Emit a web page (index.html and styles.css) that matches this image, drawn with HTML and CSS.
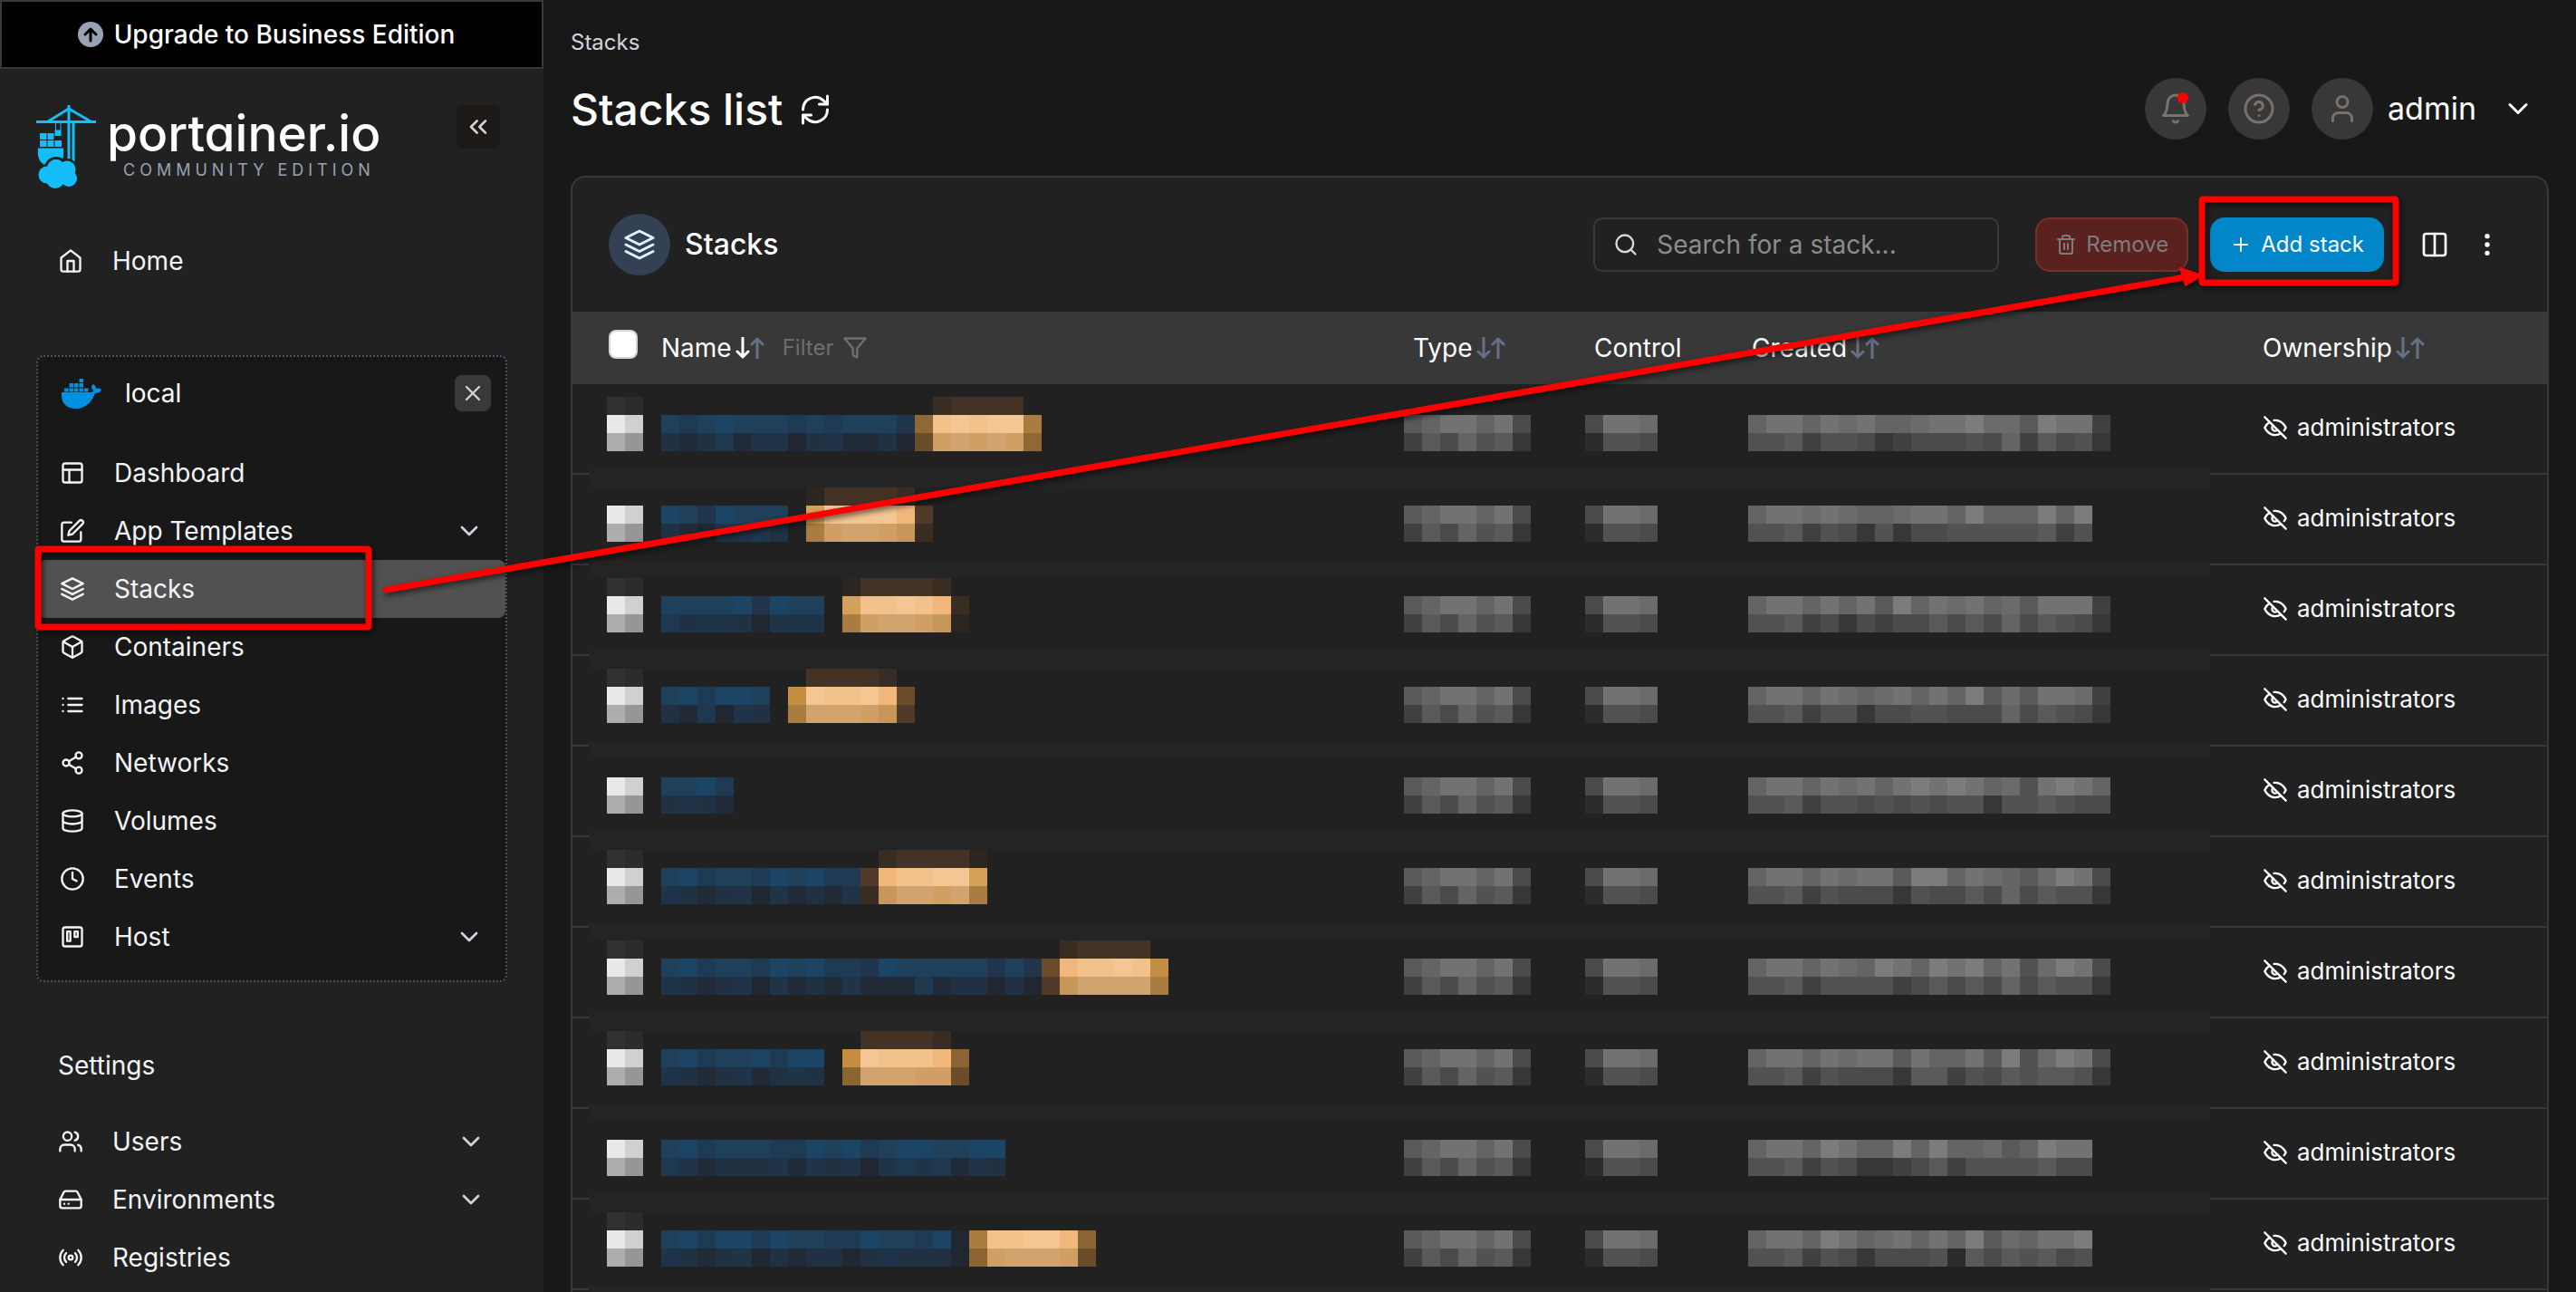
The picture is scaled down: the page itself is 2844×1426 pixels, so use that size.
FILE: index.html
```html
<!DOCTYPE html>
<html lang="en">
<head>
    <meta charset="UTF-8">
    <meta name="viewport" content="width=device-width, initial-scale=1.0">
    <title>Stacks list</title>
    <link rel="stylesheet" href="styles.css">
</head>
<body>
    <!-- icon sprite -->
    <svg class="sprite" aria-hidden="true">
        <symbol id="i-home" viewBox="0 0 24 24"><path d="M3 9l9-7 9 7v11a2 2 0 0 1-2 2H5a2 2 0 0 1-2-2z"/><path d="M9 22V12h6v10"/></symbol>
        <symbol id="i-layout" viewBox="0 0 24 24"><rect x="3" y="3" width="18" height="18" rx="2"/><path d="M3 9h18M9 21V9"/></symbol>
        <symbol id="i-edit" viewBox="0 0 24 24"><path d="M11 4H4a2 2 0 0 0-2 2v14a2 2 0 0 0 2 2h14a2 2 0 0 0 2-2v-7"/><path d="M18.5 2.5a2.12 2.12 0 0 1 3 3L12 15l-4 1 1-4z"/></symbol>
        <symbol id="i-layers" viewBox="0 0 24 24"><path d="M12 2L2 7l10 5 10-5z"/><path d="M2 17l10 5 10-5"/><path d="M2 12l10 5 10-5"/></symbol>
        <symbol id="i-box" viewBox="0 0 24 24"><path d="M21 16V8a2 2 0 0 0-1-1.73l-7-4a2 2 0 0 0-2 0l-7 4A2 2 0 0 0 3 8v8a2 2 0 0 0 1 1.73l7 4a2 2 0 0 0 2 0l7-4A2 2 0 0 0 21 16z"/><path d="M3.3 7L12 12l8.7-5M12 22V12"/></symbol>
        <symbol id="i-list" viewBox="0 0 24 24"><path d="M8 6h13M8 12h13M8 18h13M3 6h.01M3 12h.01M3 18h.01"/></symbol>
        <symbol id="i-share" viewBox="0 0 24 24"><circle cx="18" cy="5" r="3"/><circle cx="6" cy="12" r="3"/><circle cx="18" cy="19" r="3"/><path d="M8.59 13.51l6.83 3.98M15.41 6.51l-6.82 3.98"/></symbol>
        <symbol id="i-database" viewBox="0 0 24 24"><ellipse cx="12" cy="5" rx="9" ry="3"/><path d="M21 12c0 1.66-4 3-9 3s-9-1.34-9-3"/><path d="M3 5v14c0 1.66 4 3 9 3s9-1.34 9-3V5"/></symbol>
        <symbol id="i-clock" viewBox="0 0 24 24"><circle cx="12" cy="12" r="10"/><path d="M12 6v6l4 2"/></symbol>
        <symbol id="i-trello" viewBox="0 0 24 24"><rect x="3" y="3" width="18" height="18" rx="2"/><path d="M7 7h3v9H7zM14 7h3v5h-3z"/></symbol>
        <symbol id="i-users" viewBox="0 0 24 24"><path d="M16 21v-2a4 4 0 0 0-4-4H6a4 4 0 0 0-4 4v2"/><circle cx="9" cy="7" r="4"/><path d="M22 21v-2a4 4 0 0 0-3-3.87M16 3.13a4 4 0 0 1 0 7.75"/></symbol>
        <symbol id="i-drive" viewBox="0 0 24 24"><path d="M22 12H2"/><path d="M5.45 5.11L2 12v6a2 2 0 0 0 2 2h16a2 2 0 0 0 2-2v-6l-3.45-6.89A2 2 0 0 0 16.76 4H7.24a2 2 0 0 0-1.79 1.11z"/><path d="M6 16h.01M10 16h.01"/></symbol>
        <symbol id="i-radio" viewBox="0 0 24 24"><circle cx="12" cy="12" r="2"/><path d="M4.93 19.07a10 10 0 0 1 0-14.14M7.76 16.24a6 6 0 0 1 0-8.49M16.24 7.76a6 6 0 0 1 0 8.49M19.07 4.93a10 10 0 0 1 0 14.14"/></symbol>
        <symbol id="i-chevron" viewBox="0 0 24 24"><path d="M6 9l6 6 6-6"/></symbol>
        <symbol id="i-chevrons-left" viewBox="0 0 24 24"><path d="M11 17l-5-5 5-5M18 17l-5-5 5-5"/></symbol>
        <symbol id="i-x" viewBox="0 0 24 24"><path d="M18 6L6 18M6 6l12 12"/></symbol>
        <symbol id="i-refresh" viewBox="0 0 24 24"><path d="M21 2v6h-6"/><path d="M3 12a9 9 0 0 1 15-6.7L21 8"/><path d="M3 22v-6h6"/><path d="M21 12a9 9 0 0 1-15 6.7L3 16"/></symbol>
        <symbol id="i-bell" viewBox="0 0 24 24"><path d="M6 8a6 6 0 0 1 12 0c0 7 3 9 3 9H3s3-2 3-9"/><path d="M10.3 21a1.94 1.94 0 0 0 3.4 0"/></symbol>
        <symbol id="i-help" viewBox="0 0 24 24"><circle cx="12" cy="12" r="10"/><path d="M9.09 9a3 3 0 0 1 5.83 1c0 2-3 3-3 3M12 17h.01"/></symbol>
        <symbol id="i-user" viewBox="0 0 24 24"><path d="M19 21v-2a4 4 0 0 0-4-4H9a4 4 0 0 0-4 4v2"/><circle cx="12" cy="7" r="4"/></symbol>
        <symbol id="i-search" viewBox="0 0 24 24"><circle cx="11" cy="11" r="8"/><path d="M21 21l-4.3-4.3"/></symbol>
        <symbol id="i-trash" viewBox="0 0 24 24"><path d="M3 6h18M19 6v14a2 2 0 0 1-2 2H7a2 2 0 0 1-2-2V6M8 6V4a2 2 0 0 1 2-2h4a2 2 0 0 1 2 2v2M10 11v6M14 11v6"/></symbol>
        <symbol id="i-plus" viewBox="0 0 24 24"><path d="M12 5v14M5 12h14"/></symbol>
        <symbol id="i-columns" viewBox="0 0 24 24"><rect x="3" y="3" width="18" height="18" rx="2"/><path d="M12 3v18"/></symbol>
        <symbol id="i-more" viewBox="0 0 24 24"><circle cx="12" cy="12" r="1"/><circle cx="12" cy="5" r="1"/><circle cx="12" cy="19" r="1"/></symbol>
        <symbol id="i-filter" viewBox="0 0 24 24"><path d="M22 3H2l8 9.46V19l4 2v-8.54z"/></symbol>
        <symbol id="i-eye-off" viewBox="0 0 24 24"><path d="M9.88 9.88a3 3 0 1 0 4.24 4.24"/><path d="M10.73 5.08A10.43 10.43 0 0 1 12 5c7 0 10 7 10 7a13.16 13.16 0 0 1-1.67 2.68"/><path d="M6.61 6.61A13.53 13.53 0 0 0 2 12s3 7 10 7a9.74 9.74 0 0 0 5.39-1.61"/><path d="M2 2l20 20"/></symbol>
        <symbol id="i-sort" viewBox="0 0 32 24"><path class="down" d="M8 1v21M2 16l6 6 6-6"/><path class="up" d="M24 23V2M18 8l6-6 6 6"/></symbol>
    </svg>

    <div class="layout">
        <aside class="sidebar">
            <button class="upgrade" type="button">
                <svg class="upgrade-icon" viewBox="0 0 28 28"><circle cx="14" cy="14" r="14" fill="#98a2b3"/><path d="M14 21V8M8 14l6-6 6 6" fill="none" stroke="#000" stroke-width="3" stroke-linecap="round" stroke-linejoin="round"/></svg>
                Upgrade to Business Edition
            </button>

            <div class="brand">
                <svg class="crane" viewBox="0 0 66 92" fill="#13bef9">
                    <path d="M0 17h66v3H0z"/>
                    <path d="M34.500 0h3v61h-3zM39.500 20h3v44h-3z"/>
                    <path d="M13 18L36 4l24 14" fill="none" stroke="#13bef9" stroke-width="3"/>
                    <path d="M21 20h1v8h-1zM26.500 20h1v8h-1zM20.500 27.500h7V34h-7z"/>
                    <path d="M4 31h7.500v7H4zM12.500 31h7v7h-7zM4 39h7.500v7H4zM12.500 39h7v7h-7zM20.500 39h7.500v7h-7.500z"/>
                    <path d="M2 47.500h28c1 9-1 18-8 19H10C3 63 1 57 2 47.500z"/>
                    <g stroke="#212121" stroke-width="3">
                        <circle cx="12" cy="77" r="10.500"/><circle cx="22" cy="70" r="11.500"/><circle cx="34" cy="71" r="10.500"/><circle cx="36" cy="81" r="10"/><circle cx="21" cy="82" r="11"/>
                    </g>
                    <circle cx="12" cy="77" r="9.500"/><circle cx="22" cy="70" r="10"/><circle cx="34" cy="71" r="9.500"/><circle cx="36" cy="81" r="9"/><circle cx="21" cy="82" r="10"/>
                </svg>
                <div class="brand-text">
                    <span class="brand-name">portainer.io</span>
                    <span class="brand-edition">COMMUNITY EDITION</span>
                </div>
                <button class="collapse" type="button" aria-label="Collapse"><svg class="icon"><use href="#i-chevrons-left"/></svg></button>
            </div>

            <nav>
                <ul class="menu menu-home">
                    <li><a href="#"><svg class="icon"><use href="#i-home"/></svg>Home</a></li>
                </ul>

                <div class="environment">
                    <div class="environment-head">
                        <svg class="docker" viewBox="0 0 44 33" fill="#0091e2">
                            <path d="M0 15h32c2 0 3-1 3-2-3-3-2-6 0-7 2 1 3 3 3 5 2-1 5 0 6 1-1 3-4 4-7 4-4 11-12 17-21 17C4 33-1 26 0 15z"/>
                            <path d="M3 10.500h4.500v4H3zM8.500 10.500H13v4H8.500zM14 10.500h4.500v4H14zM19.500 10.500H24v4h-4.500zM25 10.500h4.500v4H25zM8.500 5H13v4.500H8.500zM14 5h4.500v4.500H14zM19.500 5H24v4.500h-4.500zM19.500 0H24v4h-4.500z"/>
                        </svg>
                        <span>local</span>
                        <button class="close" type="button" aria-label="Close"><svg class="icon"><use href="#i-x"/></svg></button>
                    </div>
                    <ul class="menu">
                        <li><a href="#"><svg class="icon"><use href="#i-layout"/></svg>Dashboard</a></li>
                        <li><a href="#"><svg class="icon"><use href="#i-edit"/></svg>App Templates<svg class="icon arrow"><use href="#i-chevron"/></svg></a></li>
                        <li><a class="active" href="#"><svg class="icon"><use href="#i-layers"/></svg>Stacks</a></li>
                        <li><a href="#"><svg class="icon"><use href="#i-box"/></svg>Containers</a></li>
                        <li><a href="#"><svg class="icon"><use href="#i-list"/></svg>Images</a></li>
                        <li><a href="#"><svg class="icon"><use href="#i-share"/></svg>Networks</a></li>
                        <li><a href="#"><svg class="icon"><use href="#i-database"/></svg>Volumes</a></li>
                        <li><a href="#"><svg class="icon"><use href="#i-clock"/></svg>Events</a></li>
                        <li><a href="#"><svg class="icon"><use href="#i-trello"/></svg>Host<svg class="icon arrow"><use href="#i-chevron"/></svg></a></li>
                    </ul>
                </div>

                <div class="menu-title">Settings</div>
                <ul class="menu">
                    <li><a href="#"><svg class="icon"><use href="#i-users"/></svg>Users<svg class="icon arrow"><use href="#i-chevron"/></svg></a></li>
                    <li><a href="#"><svg class="icon"><use href="#i-drive"/></svg>Environments<svg class="icon arrow"><use href="#i-chevron"/></svg></a></li>
                    <li><a href="#"><svg class="icon"><use href="#i-radio"/></svg>Registries</a></li>
                </ul>
            </nav>
        </aside>

        <main class="main">
            <header class="page-header">
                <div>
                    <div class="breadcrumb">Stacks</div>
                    <h1>Stacks list <button class="plain" type="button" aria-label="Refresh"><svg class="icon"><use href="#i-refresh"/></svg></button></h1>
                </div>
                <div class="user-bar">
                    <button class="round" type="button" aria-label="Notifications"><svg class="icon"><use href="#i-bell"/></svg><span class="dot"></span></button>
                    <button class="round" type="button" aria-label="Help"><svg class="icon"><use href="#i-help"/></svg></button>
                    <button class="user" type="button"><span class="round"><svg class="icon"><use href="#i-user"/></svg></span>admin<svg class="icon user-arrow"><use href="#i-chevron"/></svg></button>
                </div>
            </header>

            <section class="card">
                <div class="toolbar">
                    <span class="card-icon"><svg class="icon"><use href="#i-layers"/></svg></span>
                    <h2>Stacks</h2>
                    <label class="search"><svg class="icon"><use href="#i-search"/></svg><input type="text" placeholder="Search for a stack..." aria-label="Search for a stack"></label>
                    <button class="btn btn-remove" type="button" disabled><svg class="icon"><use href="#i-trash"/></svg>Remove</button>
                    <button class="btn btn-add" type="button"><svg class="icon"><use href="#i-plus"/></svg>Add stack</button>
                    <button class="plain" type="button" aria-label="Columns"><svg class="icon"><use href="#i-columns"/></svg></button>
                    <button class="plain" type="button" aria-label="More"><svg class="icon"><use href="#i-more"/></svg></button>
                </div>
                <table class="stacks">
                    <colgroup><col class="col-check"><col><col class="col-type"><col class="col-control"><col class="col-created"><col class="col-owner"></colgroup>
                    <thead>
                        <tr>
                            <th class="th-check"><input type="checkbox" aria-label="Select all"></th>
                            <th><div class="th">Name<svg class="sort sorted"><use href="#i-sort"/></svg><button class="filter" type="button">Filter<svg class="icon"><use href="#i-filter"/></svg></button></div></th>
                            <th class="th-type"><div class="th">Type<svg class="sort"><use href="#i-sort"/></svg></div></th>
                            <th class="th-control"><div class="th">Control</div></th>
                            <th class="th-created"><div class="th">Created<svg class="sort"><use href="#i-sort"/></svg></div></th>
                            <th><div class="th">Ownership<svg class="sort"><use href="#i-sort"/></svg></div></th>
                        </tr>
                    </thead>
                    <tbody id="rows"></tbody>
                </table>
            </section>
        </main>

        <!-- red marks over the page -->
        <svg class="marks" width="2844" height="1426" viewBox="0 0 2844 1426">
            <rect x="42" y="606" width="365" height="86" rx="1"/>
            <rect x="2431" y="220" width="214" height="92" rx="1"/>
            <path d="M426 651L2412 306"/>
            <path class="head" d="M2407 296l24 8-18 11-3-9z"/>
        </svg>
    </div>

    <script src="script.js"></script>
</body>
</html>
```
FILE: styles.css
```css
* {
    box-sizing: border-box;
}

body {
    margin: 0;
    background: #181818;
    color: #fff;
    font: 28px/40px Inter, "Liberation Sans", sans-serif;
}

button {
    padding: 0;
    border: 0;
    background: none;
    color: inherit;
    font: inherit;
}

.sprite {
    display: none;
}

.icon {
    flex: none;
    width: 28px;
    height: 28px;
    fill: none;
    stroke: currentColor;
    stroke-width: 2;
    stroke-linecap: round;
    stroke-linejoin: round;
}

.layout {
    position: relative;
    display: flex;
    height: 100vh;
    overflow: hidden;
}

/* sidebar */
.sidebar {
    flex: none;
    width: 600px;
    height: 100%;
    overflow: hidden;
    background: #212121;
    color: #f2f4f7;
}

.upgrade {
    display: flex;
    align-items: center;
    justify-content: center;
    gap: 12px;
    width: 100%;
    height: 76px;
    padding-right: 12px;
    border: 2px solid #393939;
    background: #000;
    color: #fff;
    font-weight: 500;
}

.upgrade-icon {
    width: 28px;
    height: 28px;
}

.brand {
    display: flex;
    align-items: flex-start;
    height: 148px;
    margin: 40px 48px 0 40px;
}

.crane {
    width: 66px;
    height: 92px;
}

.brand-text {
    display: flex;
    flex-direction: column;
    margin-left: 12px;
}

.brand-name {
    color: #fff;
    font-size: 55px;
    font-weight: 500;
    line-height: 62px;
    font-feature-settings: "cv11";
}

.brand-edition {
    margin-left: 18px;
    color: #98a2b3;
    font-size: 18px;
    line-height: 20px;
    letter-spacing: 5px;
}

.collapse {
    display: flex;
    align-items: center;
    justify-content: center;
    width: 48px;
    height: 48px;
    margin-left: auto;
    border-radius: 8px;
    background: #1d1916;
    color: #d0d5dd;
}

.collapse .icon {
    width: 32px;
    height: 32px;
}

.menu {
    margin: 0;
    padding: 0;
    list-style: none;
}

.menu a {
    display: flex;
    align-items: center;
    height: 64px;
    padding: 0 64px;
    color: inherit;
    text-decoration: none;
}

.menu .icon {
    margin-right: 32px;
}

.menu .arrow {
    width: 32px;
    height: 32px;
    margin: 0 0 0 auto;
    color: #d0d5dd;
}

.menu-home {
    margin-top: -8px;
}

.environment {
    margin: 72px 40px 0;
    padding-bottom: 16px;
    border: 2px dotted #475467;
    border-radius: 8px;
    background: #181818;
}

.environment-head {
    display: flex;
    align-items: center;
    height: 80px;
    margin-bottom: 16px;
    padding: 0 16px 0 26px;
    color: #fff;
}

.docker {
    width: 44px;
    height: 33px;
    margin-right: 26px;
}

.close {
    display: flex;
    align-items: center;
    justify-content: center;
    width: 40px;
    height: 40px;
    margin-left: auto;
    border-radius: 8px;
    background: #393939;
    color: #d0d5dd;
}

.environment .menu a {
    padding: 0 24px;
    border-radius: 8px;
}

.environment .menu a.active {
    background: #515151;
}

.menu-title {
    margin: 72px 64px 32px;
}

/* page header */
.main {
    flex: 1;
    min-width: 0;
    padding: 0 30px;
}

.page-header {
    display: flex;
    justify-content: space-between;
    height: 194px;
    padding-top: 27px;
}

.breadcrumb {
    color: #d0d5dd;
    font-size: 24px;
}

h1 {
    display: flex;
    align-items: center;
    gap: 18px;
    height: 56px;
    margin: 26px 0 0;
    font-size: 48px;
    font-weight: 500;
}

h1 .icon {
    display: block;
    width: 36px;
    height: 36px;
}

.user-bar {
    display: flex;
    align-items: center;
    gap: 24px;
    height: 68px;
    margin-top: 59px;
    padding-right: 16px;
}

.round {
    position: relative;
    display: flex;
    align-items: center;
    justify-content: center;
    width: 68px;
    height: 68px;
    border-radius: 50%;
    background: #383838;
    color: #7a716b;
}

.round .icon,
.card-icon .icon,
.user-arrow {
    width: 36px;
    height: 36px;
}

.dot {
    position: absolute;
    top: 16px;
    right: 20px;
    width: 12px;
    height: 12px;
    border-radius: 50%;
    background: #f00;
}

.user {
    display: flex;
    align-items: center;
    gap: 16px;
    font-size: 34px;
}

.user-arrow {
    margin-left: 12px;
}

/* card */
.card {
    min-height: 100vh;
    overflow: hidden;
    border: 2px solid #393939;
    border-radius: 16px;
    background: #212121;
}

.toolbar {
    display: flex;
    align-items: center;
    height: 148px;
    padding: 0 24px 0 40px;
}

.card-icon {
    display: flex;
    align-items: center;
    justify-content: center;
    width: 68px;
    height: 68px;
    border-radius: 50%;
    background: #344054;
    color: #e0f2fe;
}

h2 {
    margin: 0 auto 0 16px;
    font-size: 32px;
    font-weight: 500;
}

.search {
    display: flex;
    align-items: center;
    gap: 20px;
    width: 448px;
    height: 60px;
    margin-right: 40px;
    padding: 0 20px;
    border: 2px solid #393939;
    border-radius: 10px;
    color: #d9d9d9;
}

.search input {
    min-width: 0;
    padding: 0;
    border: 0;
    outline: 0;
    background: none;
    color: #fff;
    font: inherit;
}

.search input::placeholder {
    color: #8c8c8c;
}

.btn {
    display: flex;
    align-items: center;
    height: 60px;
    border-radius: 16px;
    font-size: 24px;
}

.btn .icon {
    width: 24px;
    height: 24px;
}

.btn-remove {
    gap: 10px;
    margin-right: 24px;
    padding: 0 20px;
    border: 2px solid #76302c;
    background: #5b211f;
    color: #7d7d7d;
}

.btn-add {
    gap: 10px;
    margin-right: 40px;
    padding: 0 22px;
    background: #0086c9;
}

.toolbar .plain {
    margin-right: 26px;
}

.plain .icon {
    display: block;
}

.toolbar .plain .icon {
    width: 32px;
    height: 32px;
}

/* table */
.stacks {
    width: 100%;
    border-spacing: 0;
    table-layout: fixed;
}

.col-check {
    width: 98px;
}

.col-type {
    width: 200px;
}

.col-control {
    width: 180px;
}

.col-created {
    width: 568px;
}

.col-owner {
    width: 314px;
}

th {
    height: 80px;
    padding: 0;
    background: #383838;
    font-weight: 400;
    text-align: left;
}

.th {
    display: flex;
    align-items: center;
}

.th-check {
    padding-left: 40px;
}

.th-type,
.th-control {
    padding-left: 10px;
}

.th-created {
    padding-left: 4px;
}

.th-check input {
    display: block;
    appearance: none;
    width: 32px;
    height: 32px;
    margin: 0 0 8px;
    border: 2px solid #d0d5dd;
    border-radius: 8px;
    background: #fff;
}

.sort {
    width: 32px;
    height: 24px;
    margin-left: 4px;
    fill: none;
    stroke: #667085;
    stroke-width: 3;
    stroke-linecap: round;
    stroke-linejoin: round;
    --down: #667085;
}

.sort.sorted {
    --down: #fff;
}

.down {
    stroke: var(--down);
}

.filter {
    display: flex;
    align-items: center;
    gap: 10px;
    margin-left: 20px;
    color: #6e6e6e;
    font-size: 24px;
}

tbody tr {
    position: relative;
}

td {
    height: 100px;
    padding: 14px 0 0;
    border-bottom: 2px solid #393939;
    vertical-align: top;
}

td:first-child {
    padding-left: 38px;
}

/* strip over the row border */
td:first-child::after {
    content: "";
    position: absolute;
    right: 372px;
    bottom: -14px;
    left: 18px;
    height: 20px;
    background: #242424;
}

.mosaic {
    display: block;
    height: 60px;
    shape-rendering: crispEdges;
}

.owner {
    display: flex;
    align-items: center;
    gap: 10px;
    height: 68px;
    font-size: 26px;
}

/* marks */
.marks {
    position: absolute;
    top: 0;
    left: 0;
    fill: none;
    stroke: #f00;
    stroke-width: 7;
    stroke-linecap: round;
    filter: drop-shadow(2px 3px 3px rgba(0, 0, 0, 0.6));
    pointer-events: none;
}

.marks .head {
    fill: #f00;
    stroke-width: 2;
    stroke-linejoin: round;
}
```
FILE: script.js
```js
// one letter = one 20px block
var palette = {
    // grey
    0: '#2c2c2c', 1: '#373737', 2: '#414141', 3: '#4b4b4b', 4: '#525252',
    5: '#5a5a5a', 6: '#646464', 7: '#6b6b6b', 8: '#727272', 9: '#7c7c7c',
    // blue
    a: '#1e405a', b: '#1c4464', c: '#1f3b54', d: '#20344b', e: '#203143',
    f: '#1f3349', g: '#212b37', h: '#212730', i: '#1e384f',
    // orange
    j: '#392c23', k: '#443225', l: '#2b2622', m: '#f3c28a', n: '#f4c694',
    o: '#f1b679', P: '#d5a059', p: '#c48d42', q: '#8f6835', r: '#6b4d2b',
    s: '#513a28', t: '#3a2e23', u: '#cf9f64', v: '#d1a36f', w: '#c79759',
    x: '#a97d40', y: '#8b6433',
    // check box
    A: '#303133', B: '#2b2b2b', C: '#e8e8e8', D: '#cfd0d2', E: '#acadae', F: '#959697'
};

var stacks = [
    { name: ['...............jkkkk.', 'acabaaacacaaadqmnmnnx', 'egeigffhefggehruvuvuq'], created: ['68868786678897759882', '44524431233343625341'] },
    { name: ['........lkkkkj.', 'badbaaa.Pnnnnos', 'eghffie.xuvvuwt'], created: ['6887876678869666969', '4452431413344444524'] },
    { name: ['..........lkkkkj.', 'aaaabdbaa.Pmmnmot', 'ieffehfff.xuvvuwl'], created: ['68868685968786758882', '44523132335353635431'] },
    { name: ['........kkkkj.', 'abcbba.pnmmnor', 'egihfe.xvvvuws'], created: ['68868767868695758872', '44524413344333635431'] },
    { name: ['....', 'aabc', 'efeg'], created: ['68868786898986748986', '44524434343441445433'] },
    { name: ['............jkkkkl', 'abcaacbabccsommnnP', 'fegefhfgegftwvvuvx'], created: ['68868788599687657983', '44524333143353635441'] },
    { name: ['......................jkkkk.', 'abcaacbabccdbaaaaadadrommnmp', 'fegefhfgegfgggigeehehswvvvvx'], created: ['68868769869896847983', '44524444235353635441'] },
    { name: ['...........kkkkj.', 'abcaabcbb.pnmmmoy', 'fegefgefe.yvvvuur'], created: ['68868788586685947983', '44524333155243545541'] },
    { name: ['...................', 'abcaaaccbabcabbaabb', 'ifgeeefgfefhfifigfe'], created: ['6886986696966756988', '4452431123524444533'] },
    { name: ['........................', 'abcbbcbaaccbaacbhxmmnnoy', 'fegefhegeehefeeehyuvvvur'], created: ['6886986786869576889', '4452431333405354534'] }
];

function mosaic(lines) {
    var rects = '';
    lines.forEach(function(line, y) {
        line.split('').forEach(function(key, x) {
            if (key === '.') return;
            rects += '<rect x="' + x * 20 + '" y="' + y * 20 + '" width="20" height="20" fill="' + palette[key] + '"/>';
        });
    });
    return '<svg class="mosaic" width="' + lines[1].length * 20 + '" height="60">' + rects + '</svg>';
}

var html = '';
stacks.forEach(function(stack) {
    // rows without a badge have a shorter check box
    var plain = stack.name[1].indexOf('m') < 0;
    html += '<tr>' +
        '<td>' + mosaic([plain ? '..' : 'AB', 'CD', 'EF']) + '</td>' +
        '<td>' + mosaic(stack.name) + '</td>' +
        '<td>' + mosaic(['.', '5688683', '2536451']) + '</td>' +
        '<td>' + mosaic(['.', '3887', '0443']) + '</td>' +
        '<td>' + mosaic(['.'].concat(stack.created)) + '</td>' +
        '<td><div class="owner"><svg class="icon"><use href="#i-eye-off"/></svg>administrators</div></td>' +
        '</tr>';
});
document.querySelector('#rows').innerHTML = html;
```
